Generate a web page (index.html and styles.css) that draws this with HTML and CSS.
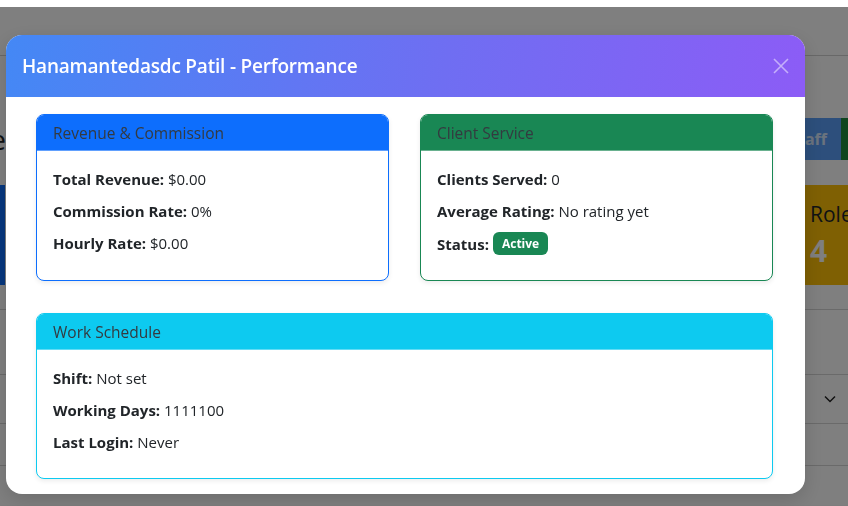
FILE: index.html
```html
<!DOCTYPE html>
<html lang="en">
<head>
<meta charset="utf-8">
<title>Staff Performance</title>
<link rel="stylesheet" href="styles.css">
</head>
<body>
<div class="page">
  <header class="topbar"></header>

  <div class="page-head">
    <div class="clip-left"><h1 class="page-title">Staff Performance</h1></div>
    <div class="hidden-mid"></div>
    <div class="actions">
      <span class="btn btn-blue"><span class="btn-text">Add Staff</span></span>
      <span class="btn btn-green"><span class="btn-text">Export</span></span>
    </div>
  </div>

  <div class="stats">
    <div class="stat stat-blue"></div>
    <div class="hidden-mid"></div>
    <div class="stat stat-yellow">
      <div class="stat-label">Roles</div>
      <div class="stat-num">4</div>
    </div>
  </div>

  <div class="table">
    <div class="trow trow-head"></div>
    <div class="trow trow-a"><span class="chev"><svg width="12" height="8" viewBox="0 0 12 8"><path d="M1 1.5 L6 6.5 L11 1.5" fill="none" stroke="#222" stroke-width="1.5"/></svg></span></div>
    <div class="trow trow-b"></div>
    <div class="trow trow-c"></div>
  </div>
</div>

<div class="backdrop">
  <div class="modal">
    <div class="modal-header">
      <h2 class="modal-title">Hanamantedasdc Patil - Performance</h2>
      <button class="close" aria-label="Close">
        <svg width="16" height="16" viewBox="0 0 16 16"><path d="M1 1 L15 15 M15 1 L1 15" stroke="currentColor" stroke-width="1.6" fill="none"/></svg>
      </button>
    </div>
    <div class="modal-body">
      <div class="card-grid">
        <div class="card card-primary">
          <div class="card-header">Revenue &amp; Commission</div>
          <div class="card-body">
            <p><strong>Total Revenue:</strong> $0.00</p>
            <p><strong>Commission Rate:</strong> 0%</p>
            <p><strong>Hourly Rate:</strong> $0.00</p>
          </div>
        </div>
        <div class="card card-success">
          <div class="card-header">Client Service</div>
          <div class="card-body">
            <p><strong>Clients Served:</strong> 0</p>
            <p><strong>Average Rating:</strong> No rating yet</p>
            <p><strong>Status:</strong> <span class="badge">Active</span></p>
          </div>
        </div>
      </div>
      <div class="card card-info card-full">
        <div class="card-header">Work Schedule</div>
        <div class="card-body">
          <p><strong>Shift:</strong> Not set</p>
          <p><strong>Working Days:</strong> 1111100</p>
          <p><strong>Last Login:</strong> Never</p>
        </div>
      </div>
    </div>
  </div>
</div>
</body>
</html>
```

FILE: styles.css
```css
* { box-sizing: border-box; }

html, body {
  margin: 0;
  padding: 0;
  width: 848px;
  height: 506px;
  overflow: hidden;
}

body {
  background: #fafafa;
  font-family: "Open Sans", "Noto Sans", "Liberation Sans", sans-serif;
  color: #212529;
}

/* ---------- underlying page ---------- */
.page {
  width: 848px;
  background: #ffffff;
}

.topbar {
  height: 56px;
  border-bottom: 1px solid #d0d0d0;
  background: #ffffff;
}

.page-head,
.stats {
  display: grid;
  grid-template-columns: 6px 799px 43px;
}

.page-head {
  margin-top: 62px;
  height: 42px;
  align-items: center;
}

.clip-left {
  overflow: hidden;
  display: flex;
  justify-content: flex-end;
}

.page-title {
  margin: 0;
  white-space: nowrap;
  font-size: 28px;
  font-weight: 400;
  color: #212529;
}

.actions {
  display: flex;
  height: 42px;
  overflow: hidden;
}

.btn {
  display: flex;
  align-items: center;
  justify-content: flex-end;
  overflow: hidden;
  height: 42px;
  flex-shrink: 0;
}

.btn-text {
  white-space: nowrap;
  font-weight: 700;
  font-size: 16px;
  color: #ffffff;
  opacity: 0.75;
}

.btn-blue {
  width: 36px;
  padding-right: 14px;
  background: #5a9ff8;
}

.btn-green {
  width: 60px;
  background: #1f8a3f;
  justify-content: flex-start;
  padding-left: 16px;
}

.stats {
  margin-top: 25px;
  height: 100px;
}

.stat-blue {
  width: 5px;
  background: #0d6efd;
}

.stat-yellow {
  background: #ffc107;
  overflow: hidden;
  padding: 14px 0 0 5px;
}

.stat-label {
  font-size: 21px;
  color: #212529;
  white-space: nowrap;
  line-height: 30px;
}

.stat-num {
  font-size: 30px;
  font-weight: 700;
  color: #ffffff;
  line-height: 44px;
}

.table {
  margin-top: 24px;
}

.trow {
  border-top: 1px solid #d4d4d4;
  display: flex;
  align-items: center;
  justify-content: flex-end;
}

.trow-head { height: 65px; }
.trow-a { height: 49px; }
.trow-b { height: 42px; }
.trow-c { height: 40px; }

.chev {
  display: flex;
  margin-right: 12px;
}

/* ---------- modal ---------- */
.backdrop {
  position: fixed;
  top: 7px;
  left: 0;
  right: 0;
  bottom: 0;
  background: rgba(0, 0, 0, 0.5);
  padding: 28px 0 0 6px;
}

.modal {
  width: 799px;
  background: #ffffff;
  border-radius: 16px;
  overflow: hidden;
  box-shadow: 0 6px 20px rgba(0, 0, 0, 0.15);
}

.modal-header {
  height: 62px;
  display: flex;
  align-items: center;
  justify-content: space-between;
  padding: 0 16px 0 16px;
  background: linear-gradient(100deg, #4488f5 0%, #6f6ef2 55%, #8c5cf6 100%);
}

.modal-title {
  margin: 0;
  font-size: 19px;
  font-weight: 600;
  color: #ffffff;
  letter-spacing: -0.2px;
}

.close {
  border: 0;
  background: none;
  padding: 0;
  width: 16px;
  height: 16px;
  color: rgba(255, 255, 255, 0.5);
  display: flex;
}

.modal-body {
  padding: 17px 32px 15px 30px;
}

.card-grid {
  display: grid;
  grid-template-columns: 1fr 1fr;
  column-gap: 31px;
}

.card {
  border: 1px solid;
  border-radius: 8px;
  overflow: hidden;
  box-shadow: 0 2px 5px rgba(0, 0, 0, 0.08);
  background: #ffffff;
}

.card-full {
  margin-top: 32px;
}

.card-header {
  height: 36px;
  display: flex;
  align-items: center;
  padding: 0 16px;
  font-size: 15.5px;
  color: #343a40;
  border-bottom: 1px solid rgba(255, 255, 255, 0.35);
}

.card-primary { border-color: #0d6efd; }
.card-primary .card-header { background: #0d6efd; }
.card-success { border-color: #198754; }
.card-success .card-header { background: #198754; }
.card-info { border-color: #0dcaf0; }
.card-info .card-header { background: #0dcaf0; }

.card-body {
  padding: 17px 16px 15px;
  font-size: 15px;
}

.card-body p {
  margin: 0 0 10px;
  line-height: 22px;
  display: flex;
  align-items: center;
  white-space: pre;
}

.card-body strong {
  font-weight: 700;
}

.badge {
  display: inline-flex;
  align-items: center;
  height: 23px;
  background: #198754;
  color: #ffffff;
  font-size: 12px;
  font-weight: 700;
  padding: 0 9px;
  border-radius: 6px;
  margin-left: 4px;
}
```
